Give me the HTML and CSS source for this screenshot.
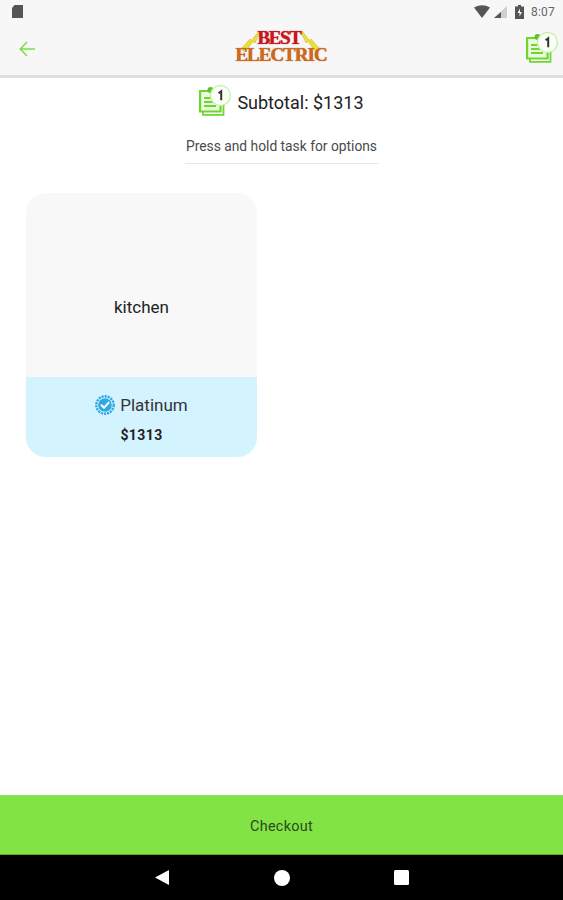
FILE: index.html
```html
<!DOCTYPE html>
<html lang="en">
<head>
<meta charset="utf-8">
<title>Best Electric</title>
<link rel="stylesheet" href="styles.css">
</head>
<body>
<svg class="defs" width="0" height="0" aria-hidden="true">
  <symbol id="tasks" viewBox="0 0 33 31">
    <path d="M4 27v2.800h20.500V11" fill="none" stroke="#6fd62f" stroke-width="1.800"/>
    <path d="M1.100 6h15l5.500 5v15.500H1.100z" fill="#eafbe0" stroke="#6fd62f" stroke-width="2.200"/>
    <path d="M5 13h12M5 17h12M5 21h12" stroke="#6fd62f" stroke-width="2"/>
    <circle cx="11.500" cy="5" r="3" fill="#5cc429"/>
    <circle cx="21.500" cy="10.500" r="10" fill="#fafff6" stroke="#c2efa6" stroke-width="1.200"/>
    <path d="M19.600 8.200l2.600-2v9" fill="none" stroke="#333" stroke-width="2"/>
  </symbol>
</svg>
<div class="screen">
  <header class="status">
    <svg class="sd" viewBox="0 0 11 13" width="11" height="13"><path d="M2.500 0H11v13H0V3z" fill="#555"/></svg>
    <div class="status-right">
      <svg viewBox="0 0 16 13" width="16" height="13"><path d="M0 2.500Q8-2 16 2.500L8 13z" fill="#555"/></svg>
      <svg viewBox="0 0 13 12" width="13" height="12"><path d="M13 0v12H0z" fill="#cfcfcf"/><path d="M7 6v6H0z" fill="#555"/></svg>
      <svg class="batt" viewBox="0 0 9 14" width="9" height="14"><path d="M3 0h3v1.500h3V14H0V1.500h3z" fill="#555"/><path d="M5 3.500L2.500 8h2v3.500L7 7H5z" fill="#f7f7f7"/></svg>
      <span class="time">8:07</span>
    </div>
  </header>
  <nav class="appbar">
    <svg class="back" viewBox="0 0 16 16" width="16" height="16"><path d="M8 1L1.300 8 8 15M1.500 8H16" fill="none" stroke="#7be04a" stroke-width="1.600"/></svg>
    <div class="logo">
      <svg class="bolts" viewBox="0 0 92 36" width="92" height="36">
        <path d="M6 20L15 10l1.500 1.500L24 2l1 1-5 11-2-1.500L10 23z" fill="#ecdf3c" stroke="#bfae2c" stroke-width=".5"/>
        <path d="M85 20L76 10l-1.500 1.500L67 2l-1 1 5 11 2-1.500L81 23z" fill="#ecdf3c" stroke="#bfae2c" stroke-width=".5"/>
      </svg>
      <div class="logo-text">BEST<br>ELECTRIC</div>
    </div>
    <svg class="cart" width="33" height="31"><use href="#tasks"/></svg>
  </nav>
  <main class="content">
    <div class="summary">
      <svg class="cart" width="33" height="31"><use href="#tasks"/></svg>
      <span>Subtotal: $1313</span>
    </div>
    <p class="hint">Press and hold task for options</p>
    <section class="grid">
      <article class="card">
        <div class="card-name">kitchen</div>
        <div class="card-foot">
          <div class="tier">
            <svg viewBox="0 0 20 20" width="20" height="20">
              <circle cx="10" cy="10" r="8.700" fill="none" stroke="#2fa9e4" stroke-width="2.400" stroke-dasharray="2.200 .9"/>
              <circle cx="10" cy="10" r="6.800" fill="#2fa9e4"/>
              <path d="M6 9.800l3 3 5.200-5.800" fill="none" stroke="#fff" stroke-width="2"/>
            </svg>
            <span>Platinum</span>
          </div>
          <div class="price">$1313</div>
        </div>
      </article>
    </section>
  </main>
  <button class="checkout">Checkout</button>
  <footer class="sysnav">
    <svg viewBox="0 0 14 15" width="14" height="15"><path d="M14 0v15L0 7.500z" fill="#fff"/></svg>
    <svg viewBox="0 0 16 16" width="16" height="16"><circle cx="8" cy="8" r="8" fill="#fff"/></svg>
    <svg viewBox="0 0 15 15" width="15" height="15"><rect width="15" height="15" rx="1.500" fill="#fff"/></svg>
  </footer>
</div>
</body>
</html>
```
FILE: styles.css
```css
* { box-sizing: border-box; }
html, body { margin: 0; height: 100%; }
body { font-family: Roboto, "Liberation Sans", sans-serif; background: #fff; color: #222; overflow: hidden; }
.defs { display: block; height: 0; }
svg { display: block; }
.screen { display: flex; flex-direction: column; height: 900px; }

.status { height: 25px; flex: none; background: #f7f7f7; display: flex; align-items: center; justify-content: space-between; padding: 0 8px 2px 12px; }
.status-right { display: flex; align-items: center; gap: 4px; }
.batt { margin: 0 3px 0 4px; }
.time { font-size: 12px; color: #666; letter-spacing: .2px; }

.appbar { height: 53px; flex: none; background: #f7f7f7; border-bottom: 3px solid #dedede; display: flex; align-items: center; justify-content: space-between; padding: 0 4px 2px 19px; position: relative; }
.appbar .cart { margin-bottom: 3px; }
.logo { width: 92px; height: 36px; position: absolute; left: 235px; top: 4px; }
.bolts { position: absolute; left: 0; top: 0; }
.logo-text { position: relative; text-align: center; text-indent: -4px; font-family: "Liberation Serif", serif; font-weight: 700; font-size: 19px; line-height: 17px; letter-spacing: -1px; color: #d0691e; text-shadow: 0 0 1px #a8501a; white-space: nowrap; }
.logo-text::first-line { color: #c8161e; letter-spacing: -1.400px; text-shadow: 0 0 1px #c8161e; }

.content { flex: 1; min-height: 0; display: flex; flex-direction: column; align-items: center; }
.summary { display: flex; align-items: center; gap: 5px; height: 34px; margin-top: 6px; font-size: 18px; color: #222; }
.summary span { padding-top: 2px; }
.summary .cart { margin-bottom: 1px; }
.hint { width: 194px; margin: 20px 0 0; padding-bottom: 8px; border-bottom: 1px solid #e8e8e8; text-align: center; font-size: 13.800px; line-height: 17px; color: #4a4a4a; white-space: nowrap; }
.grid { align-self: stretch; padding: 29px 26px 0; display: grid; grid-template-columns: 231px; }
.card { height: 264px; border-radius: 20px; overflow: hidden; display: flex; flex-direction: column; background: #f8f8f8; }
.card-name { flex: 1; display: flex; align-items: center; justify-content: center; font-size: 17px; padding-top: 44px; color: #222; }
.card-foot { height: 80px; flex: none; background: #d3f4ff; display: flex; flex-direction: column; align-items: center; padding-top: 18px; }
.tier { display: flex; align-items: center; gap: 5px; font-size: 17px; color: #333; height: 20px; }
.price { margin-top: 12px; font-size: 14px; font-weight: 700; letter-spacing: .4px; color: #222; }

.checkout { height: 60px; flex: none; width: 100%; border: 0; border-top: 1px solid #8fe35f; border-bottom: 1px solid #5cae2c; background: #82e345; font-family: inherit; font-size: 14.400px; letter-spacing: .3px; color: #2c4a1c; padding-top: 3px; }
.sysnav { height: 45px; flex: none; background: #000; display: flex; align-items: center; padding: 0 154px 0 155px; justify-content: space-between; }
```
